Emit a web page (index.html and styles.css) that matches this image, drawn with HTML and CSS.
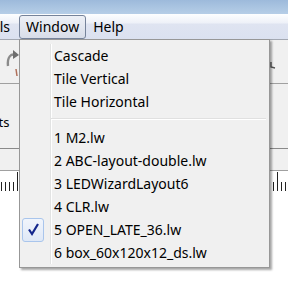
FILE: index.html
```html
<!DOCTYPE html>
<html lang="en">
<head>
<meta charset="UTF-8">
<meta name="viewport" content="width=device-width, initial-scale=1.0">
<title>Window menu</title>
<link rel="stylesheet" href="styles.css">
</head>
<body>
  <div class="app">
    <div class="titlebar"></div>
    <div class="menubar">
      <span class="menubar-item menubar-first">Tools</span>
      <span class="menubar-item active">Window</span>
      <span class="menubar-item">Help</span>
    </div>
    <div class="toolbar">
      <svg class="redo" width="14" height="24" viewBox="0 0 14 24">
        <path d="M3 20 C2 11 6 7 11 9" fill="none" stroke="#8a8a8a" stroke-width="2.4"/>
        <path d="M8 4 L14 9 L8 13 Z" fill="#6e6e6e"/>
        <path d="M11 23 L12 30" stroke="#b0705a" stroke-width="1.5"/>
      </svg>
      <svg class="tool-right" width="6" height="8" viewBox="0 0 6 8">
        <path d="M1 0 L1 5 L5 6" fill="none" stroke="#555" stroke-width="1.4"/>
      </svg>
    </div>
    <div class="panel"><span class="panel-label">Parts</span></div>
    <div class="strip"></div>
    <div class="ruler"></div>
    <div class="canvas"></div>

    <div class="menu">
      <div class="menu-items">
        <div class="menu-item"><span class="menu-icon"></span><span class="menu-label">Cascade</span></div>
        <div class="menu-item"><span class="menu-icon"></span><span class="menu-label">Tile Vertical</span></div>
        <div class="menu-item"><span class="menu-icon"></span><span class="menu-label">Tile Horizontal</span></div>
        <div class="menu-separator"></div>
        <div class="menu-item"><span class="menu-icon"></span><span class="menu-label">1 M2.lw</span></div>
        <div class="menu-item"><span class="menu-icon"></span><span class="menu-label">2 ABC-layout-double.lw</span></div>
        <div class="menu-item"><span class="menu-icon"></span><span class="menu-label">3 LEDWizardLayout6</span></div>
        <div class="menu-item"><span class="menu-icon"></span><span class="menu-label">4 CLR.lw</span></div>
        <div class="menu-item">
          <span class="menu-icon">
            <span class="check-box">
              <svg width="20" height="22" viewBox="0 0 20 22">
                <path d="M6 10.5 L9 15 L15 5" fill="none" stroke="#14268c" stroke-width="2.2" stroke-linejoin="miter"/>
              </svg>
            </span>
          </span>
          <span class="menu-label">5 OPEN_LATE_36.lw</span>
        </div>
        <div class="menu-item"><span class="menu-icon"></span><span class="menu-label">6 box_60x120x12_ds.lw</span></div>
      </div>
    </div>
  </div>
</body>
</html>
```

FILE: styles.css
```css
body {
  margin: 0;
  padding: 0;
  background-color: #fff;
  font-family: "Noto Sans", "Open Sans", sans-serif;
  font-size: 14px;
  color: #000;
}

.app {
  position: relative;
  width: 288px;
  height: 287px;
  overflow: hidden;
  background-color: #fff;
}

.titlebar {
  height: 14px;
  background: linear-gradient(to bottom, #9dbadb, #b6cee7);
}

.menubar {
  height: 25px;
  display: flex;
  align-items: flex-start;
  border-bottom: 1px solid #a3a8b2;
  background: linear-gradient(to bottom, #fdfeff 0, #eef1f8 9px, #dfe4f1 10px, #dbe1f0 100%);
}

.menubar-item {
  box-sizing: border-box;
  height: 24px;
  margin-top: 1px;
  padding: 0 6px;
  line-height: 22px;
  border: 1px solid transparent;
  border-radius: 3px;
  white-space: nowrap;
}

.menubar-first {
  margin-left: -31px;
}

.menubar-item.active {
  margin-left: 2px;
  border-color: #76839a;
  background: linear-gradient(to bottom, #edf0f6, #d8dde8);
}

.toolbar {
  height: 43px;
  display: flex;
  align-items: flex-start;
  background-color: #f0f0f0;
  border-bottom: 1px solid #a0a0a0;
}

.redo {
  margin-top: 6px;
  margin-left: 5px;
  overflow: visible;
}

.tool-right {
  margin-left: auto;
  margin-right: 12px;
  margin-top: 22px;
}

.panel {
  height: 64px;
  background-color: #f0f0f0;
  border-bottom: 1px solid #8a8a8a;
}

.panel-label {
  display: block;
  margin-left: -22px;
  padding-top: 30px;
  font-size: 13px;
  line-height: 16px;
}

.strip {
  height: 21px;
  background-color: #f0f0f0;
  border-bottom: 1px solid #a0a0a0;
}

.ruler {
  height: 22px;
  background-color: #fff;
  background-image:
    repeating-linear-gradient(to right, #222 0 1px, transparent 1px 20px),
    repeating-linear-gradient(to right, #222 0 1px, transparent 1px 4px);
  background-repeat: no-repeat;
  background-size: 100% 19px, 100% 9px;
  background-position: 17px 1px, 1px 11px;
}

.canvas {
  height: 100px;
  background-color: #fff;
}

/* dropdown */

.menu {
  position: absolute;
  left: 19px;
  top: 39px;
  width: 251px;
  box-sizing: border-box;
  padding: 4px 1px 3px;
  background-color: #f0f0f0;
  border: 1px solid #979797;
  box-shadow: 2px 2px 2px rgba(0, 0, 0, 0.35);
}

.menu-items {
  background: linear-gradient(to right, transparent 0 29px, #e2e3e3 29px 30px, #fff 30px 31px, transparent 31px);
}

.menu-item {
  display: flex;
  align-items: center;
  height: 23px;
  white-space: nowrap;
}

.menu-icon {
  flex: none;
  width: 33px;
  height: 23px;
  display: flex;
  align-items: center;
}

.check-box {
  box-sizing: border-box;
  width: 22px;
  height: 24px;
  margin-left: 1px;
  display: flex;
  align-items: center;
  justify-content: center;
  border: 1px solid #a9c5ec;
  border-radius: 3px;
  background: linear-gradient(to bottom, #f1f5fc, #dfe8f6);
}

.menu-label {
  line-height: 23px;
}

.menu-separator {
  height: 0;
  margin: 5px 2px 6px 30px;
  border-top: 1px solid #e0e0e0;
  border-bottom: 1px solid #fff;
}
```
